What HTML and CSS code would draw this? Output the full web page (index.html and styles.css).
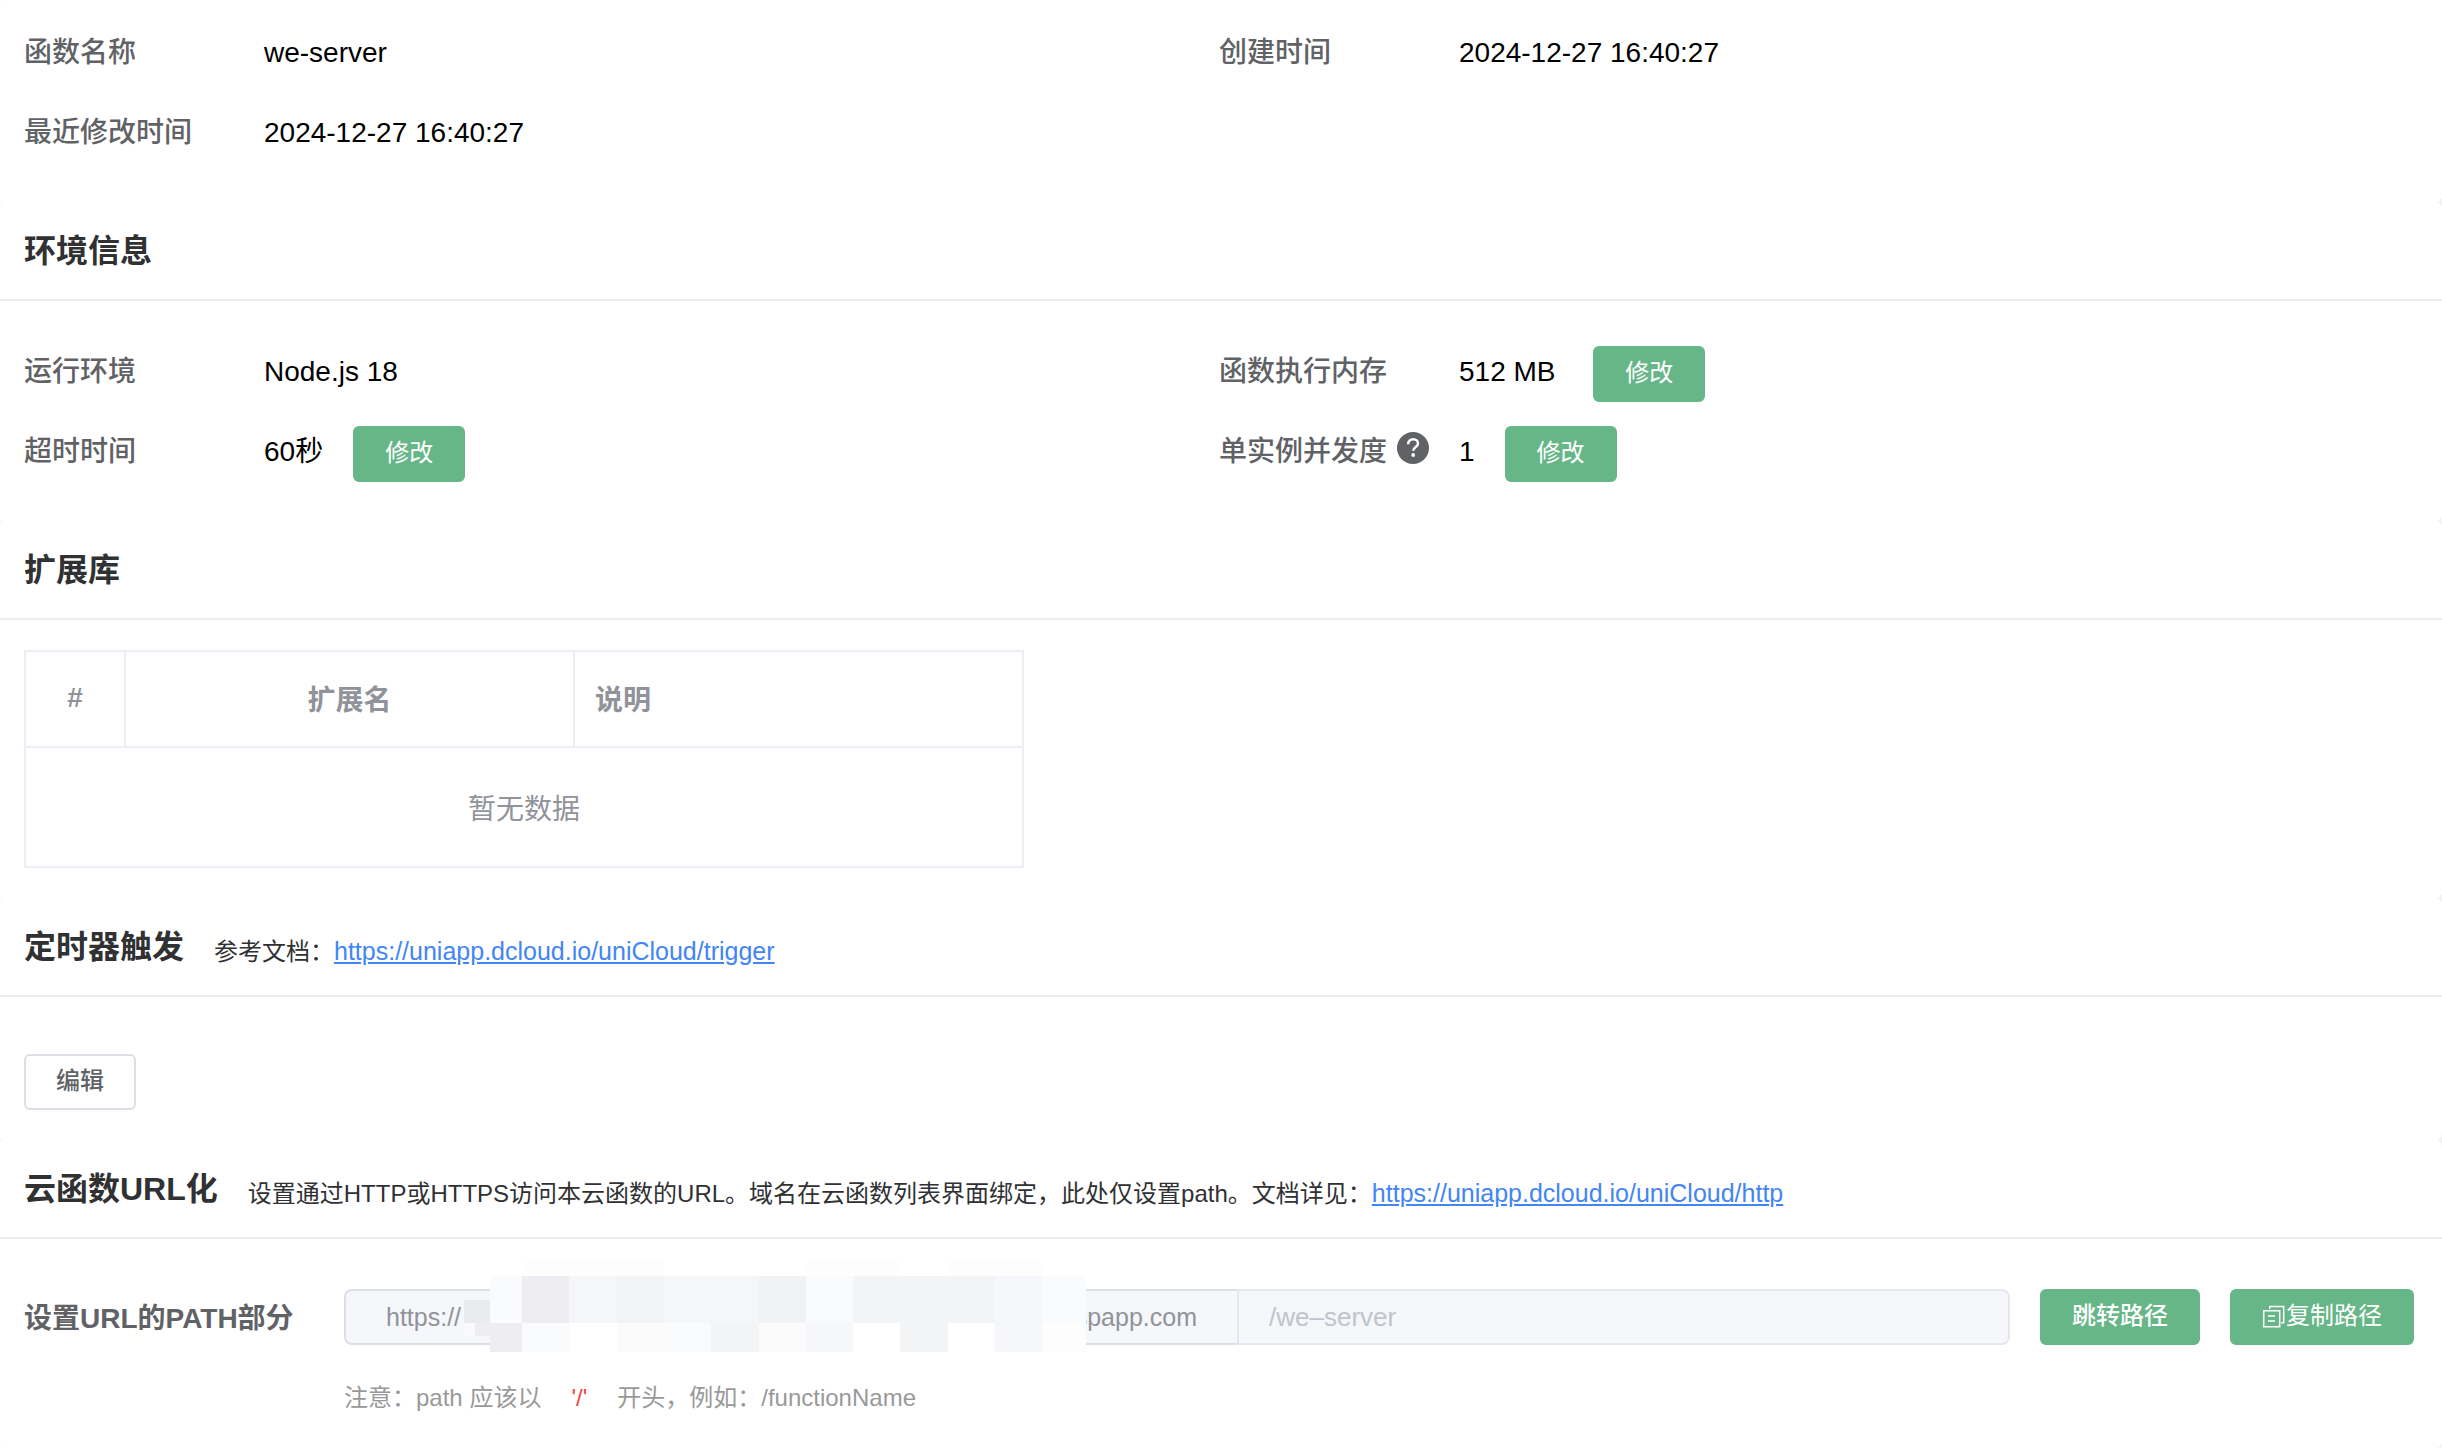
FILE: index.html
```html
<!DOCTYPE html>
<html lang="zh-CN">
<head>
    <meta charset="UTF-8">
    <meta name="viewport" content="width=device-width, initial-scale=1.0">
    <title>云函数详情</title>
    <link rel="stylesheet" href="styles.css">
</head>
<body>

<!-- 基本信息 -->
<section class="card">
    <div class="info-grid info-basic">
        <div class="info-item">
            <span class="info-label">函数名称</span>
            <span class="info-value">we-server</span>
        </div>
        <div class="info-item">
            <span class="info-label">创建时间</span>
            <span class="info-value">2024-12-27 16:40:27</span>
        </div>
        <div class="info-item">
            <span class="info-label">最近修改时间</span>
            <span class="info-value">2024-12-27 16:40:27</span>
        </div>
    </div>
</section>

<!-- 环境信息 -->
<section class="card">
    <div class="card-header">
        <h2>环境信息</h2>
    </div>
    <div class="info-grid">
        <div class="info-item">
            <span class="info-label">运行环境</span>
            <span class="info-value">Node.js 18</span>
        </div>
        <div class="info-item">
            <span class="info-label">函数执行内存</span>
            <span class="info-value">512 MB&nbsp;</span>
            <button type="button" class="btn btn-primary">修改</button>
        </div>
        <div class="info-item">
            <span class="info-label">超时时间</span>
            <span class="info-value">60秒</span>
            <button type="button" class="btn btn-primary">修改</button>
        </div>
        <div class="info-item">
            <span class="info-label">单实例并发度
                <svg class="help-icon" viewBox="0 0 32 32" aria-hidden="true">
                    <circle cx="16" cy="16" r="16" fill="#606266"/>
                    <path d="M11.2 12.2C11.2 8.900 13.400 7.200 16.200 7.200C19 7.200 21 9 21 11.600C21 15 16.200 15 16.200 18.800" fill="none" stroke="#fff" stroke-width="2.400"/>
                    <circle cx="16.200" cy="23" r="1.900" fill="#fff"/>
                </svg>
            </span>
            <span class="info-value">1</span>
            <button type="button" class="btn btn-primary">修改</button>
        </div>
    </div>
</section>

<!-- 扩展库 -->
<section class="card">
    <div class="card-header">
        <h2>扩展库</h2>
    </div>
    <div class="table-wrap">
        <table class="ext-table">
            <thead>
                <tr>
                    <th class="col-index">#</th>
                    <th>扩展名</th>
                    <th class="col-desc">说明</th>
                </tr>
            </thead>
            <tbody>
                <tr>
                    <td colspan="3">暂无数据</td>
                </tr>
            </tbody>
        </table>
    </div>
</section>

<!-- 定时器触发 -->
<section class="card">
    <div class="card-header">
        <h2>定时器触发</h2>
        <p>参考文档：<a href="https://uniapp.dcloud.io/uniCloud/trigger">https://uniapp.dcloud.io/uniCloud/trigger</a></p>
    </div>
    <div class="trigger-body">
        <button type="button" class="btn">编辑</button>
    </div>
</section>

<!-- 云函数URL化 -->
<section class="card">
    <div class="card-header">
        <h2>云函数URL化</h2>
        <p>设置通过HTTP或HTTPS访问本云函数的URL。域名在云函数列表界面绑定，此处仅设置path。文档详见：<a href="https://uniapp.dcloud.io/uniCloud/http">https://uniapp.dcloud.io/uniCloud/http</a></p>
    </div>
    <div class="url-form">
        <label class="url-label" for="path">设置URL的PATH部分</label>
        <div class="url-group">
            <div class="url-prefix">
                <span>https://</span>
                <span>spapp.com</span>
                <!-- 域名打码 -->
                <svg class="mosaic" viewBox="0 0 622 90" shape-rendering="crispEdges" aria-hidden="true">
                    <path fill="#fff" d="M26 14h596v76H26z"/>
                    <path fill="#fdfdfd" d="M58 0h142v14H58zM342 0h94v14h-94zM484 0h94v14h-94zM578 61h44v29h-44z"/>
                    <path fill="#e9ebef" d="M0 38h26v23H0z"/>
                    <path fill="#f8f9fc" d="M0 61h11v13H0z"/>
                    <path fill="#ededf2" d="M11 61h15v13H11zM26 61h32v29H26zM58 14h47v47H58z"/>
                    <path fill="#fafbfd" d="M26 14h32v47H26zM58 61h47v29H58zM200 61h47v29h-47zM342 14h47v47h-47zM578 14h44v47h-44z"/>
                    <path fill="#f5f6f8" d="M105 14h48v47h-48zM200 14h47v47h-47zM247 14h48v47h-48z"/>
                    <path fill="#f3f4f6" d="M153 14h47v47h-47zM389 14h142v47H389zM247 61h48v29h-48zM436 61h48v29h-48z"/>
                    <path fill="#f1f2f4" d="M295 14h47v47h-47z"/>
                    <path fill="#f6f7fa" d="M531 14h47v76h-47zM342 61h47v29h-47z"/>
                    <path fill="#fbfbfb" d="M153 61h47v29h-47zM295 61h47v29h-47z"/>
                </svg>
            </div>
            <input type="text" id="path" class="url-input" placeholder="/we–server" disabled>
        </div>
        <button type="button" class="btn btn-primary btn-bold">跳转路径</button>
        <button type="button" class="btn btn-primary">
            <svg class="copy-icon" viewBox="0 0 24 24" fill="none" stroke="#fff" stroke-width="1.500" aria-hidden="true">
                <path d="M1.700 6.700h16v16h-16z"/>
                <path d="M7.700 5V2.400h14v16.300h-2.500M6 12h7M6 17h7"/>
            </svg>复制路径
        </button>
        <p class="url-hint">注意：path 应该以<em>'/'</em>开头，例如：/functionName</p>
    </div>
</section>

</body>
</html>
```
FILE: styles.css
```css
* {
    box-sizing: border-box;
}
body {
    margin: 0;
    min-height: 100vh;
    display: flex;
    flex-direction: column;
    font-family: "Liberation Sans", "Noto Sans CJK SC", sans-serif;
    font-size: 28px;
    color: #000;
    background-color: #f2f2f2;
}
.card {
    background-color: #fff;
    border-radius: 2px 6px 6px 2px;
}
.card:first-child {
    border-top-right-radius: 0;
}
.card:last-child {
    flex: 1;
}

/* Card header */
.card-header {
    display: flex;
    align-items: flex-start;
    gap: 30px;
    height: 99px;
    padding: 0 24px;
    border-bottom: 2px solid #ededed;
    color: #303133;
}
.card-header h2 {
    margin: 0;
    font-size: 32px;
    font-weight: bold;
    line-height: 98px;
}
.card-header p {
    margin: 0;
    font-size: 24px;
    line-height: 106px;
}
.card-header a {
    color: #4285f4;
    font-size: 25px;
    text-decoration: underline;
}

/* Label / value rows */
.info-grid {
    display: grid;
    grid-template-columns: 1fr 1fr;
    padding: 30px 28px 30px 24px;
}
.info-basic {
    padding-top: 12px;
}
.info-item {
    display: flex;
    align-items: baseline;
    height: 80px;
    line-height: 82px;
}
.info-label {
    display: flex;
    align-items: center;
    gap: 10px;
    width: 240px;
    color: #606266;
    font-weight: 500;
}
.info-value {
    margin-right: 30px;
}
.help-icon {
    width: 32px;
    height: 32px;
    margin-bottom: 8px;
}

/* Buttons */
.btn {
    display: inline-flex;
    align-items: center;
    justify-content: center;
    height: 56px;
    padding: 0 30px 2px;
    border: 2px solid #dcdfe6;
    border-radius: 6px;
    background-color: #fff;
    color: #606266;
    font-family: inherit;
    font-size: 24px;
    font-weight: 500;
    line-height: 32px;
    cursor: pointer;
}
.btn-primary {
    border-color: #66b687;
    background-color: #66b687;
    color: #fff;
    font-weight: normal;
}
.btn-bold {
    font-weight: 500;
}
.btn-primary:hover {
    opacity: 0.9;
}
.copy-icon {
    width: 24px;
    height: 24px;
}

/* Extension table */
.table-wrap {
    padding: 30px 24px;
}
.ext-table {
    width: 1000px;
    max-width: 100%;
    table-layout: fixed;
    border-collapse: collapse;
    border: 2px solid #ebeef5;
    color: #909399;
    text-align: center;
}
.ext-table th {
    height: 96px;
    padding: 0 20px 2px;
    border: 2px solid #ebeef5;
    font-weight: bold;
}
.ext-table td {
    height: 120px;
    padding: 0;
}
.ext-table .col-index {
    width: 100px;
}
.ext-table .col-desc {
    text-align: left;
}

.trigger-body {
    padding: 57px 24px 30px;
}
.trigger-body .btn {
    display: flex;
}

/* URL form */
.url-form {
    display: grid;
    grid-template-columns: 290px 1fr auto auto;
    column-gap: 30px;
    align-items: center;
    padding: 50px 28px 30px 24px;
}
.url-label {
    padding-bottom: 2px;
    color: #606266;
    font-weight: bold;
}
.url-group {
    display: flex;
    height: 56px;
}
.url-prefix {
    position: relative;
    display: flex;
    align-items: center;
    justify-content: space-between;
    width: 893px;
    padding: 0 40px;
    border: 2px solid #dcdfe6;
    border-right: none;
    border-radius: 8px 0 0 8px;
    background-color: #f5f7fa;
    color: #909399;
    font-size: 25px;
}
.mosaic {
    position: absolute;
    left: 118px;
    top: -29px;
    width: 622px;
    height: 90px;
}
.url-input {
    flex: 1;
    min-width: 0;
    padding: 0 30px;
    border: 2px solid #e4e7ed;
    border-radius: 0 8px 8px 0;
    background-color: #f5f7fa;
    font-family: inherit;
    font-size: 26px;
}
.url-input::placeholder {
    color: #c0c4cc;
}
.url-hint {
    grid-column: 2 / -1;
    margin: 33px 0 0;
    color: #999;
    font-size: 24px;
    line-height: 40px;
}
.url-hint em {
    margin: 0 30px;
    color: #f04848;
    font-style: normal;
}
```
